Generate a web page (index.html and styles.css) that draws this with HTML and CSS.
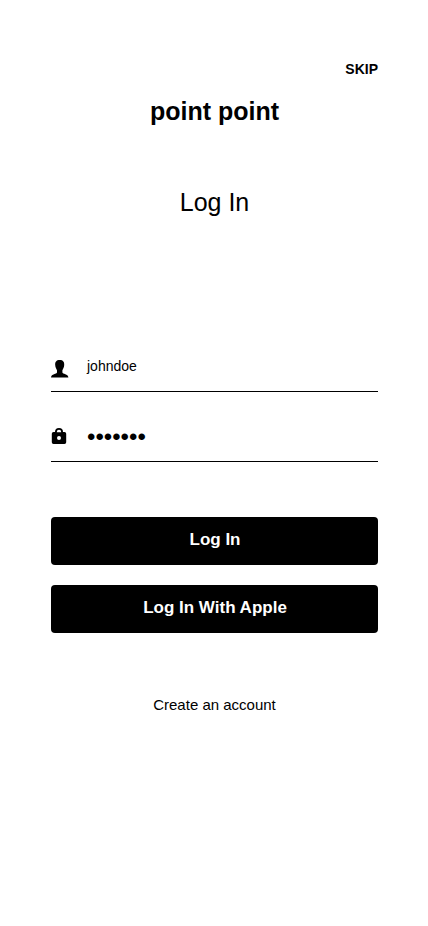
FILE: index.html
```html
<!DOCTYPE html>
<html lang="en">
<head>
<meta charset="utf-8">
<title>Log In</title>
<link rel="stylesheet" href="styles.css">
</head>
<body>
<main class="screen">
  <a class="skip">SKIP</a>
  <div class="brand">point point</div>
  <h1 class="title">Log In</h1>
  <div class="field field-user">
    <svg class="icon" width="18" height="18" viewBox="0 0 18 18"><path d="M8.700 0C5.300 0 4 2 4.200 5C4.300 7.500 5.400 9 6 10.200V12.500C5.800 14.300 .3 13.600 0 17.600H17.400C17.100 13.600 11.600 14.300 11.400 12.500V10.200C12 9 13.100 7.500 13.200 5C13.400 2 12.100 0 8.700 0Z"/></svg>
    <span class="value">johndoe</span>
  </div>
  <div class="field field-pass">
    <svg class="icon" width="16" height="16" viewBox="0 0 16 16"><path fill-rule="evenodd" d="M4 4V4A4 4 0 0 1 12 4V4H13.500A1.700 1.700 0 0 1 15.200 5.700V14.300A1.700 1.700 0 0 1 13.500 16H2.500A1.700 1.700 0 0 1 .8 14.300V5.700A1.700 1.700 0 0 1 2.500 4ZM5.800 4.300H10.200V4A2.200 2.200 0 0 0 5.800 4ZM8 8A2 2 0 1 0 8 12A2 2 0 1 0 8 8Z"/></svg>
    <span class="value dots">•••••••</span>
  </div>
  <button class="button">Log In</button>
  <button class="button">Log In With Apple</button>
  <a class="create">Create an account</a>
</main>
</body>
</html>
```
FILE: styles.css
```css
* { box-sizing: border-box; }
body { margin: 0; background: #fff; color: #000; font-family: "Liberation Sans", Arial, sans-serif; }
.screen { height: 926px; padding: 60px 50px 0 51px; display: flex; flex-direction: column; }
.skip { align-self: flex-end; font-size: 14px; line-height: 18px; font-weight: 700; }
.brand { margin-top: 18px; text-align: center; font-size: 25px; line-height: 30px; font-weight: 700; }
.title { margin: 61px 0 0; text-align: center; font-size: 25px; line-height: 30px; font-weight: 400; }
.field { display: flex; align-items: flex-start; border-bottom: 1px solid #000; }
.field-user { margin-top: 133px; height: 42px; padding-top: 10px; }
.field-pass { height: 70px; padding-top: 36px; margin-bottom: 55px; }
.icon { flex: none; display: block; }
.value { font-size: 14px; line-height: 16px; margin-left: 18px; margin-top: -2px; }
.dots { margin-left: 20px; font-size: 24px; margin-top: 1px; }
.button { height: 48px; margin: 0 0 20px; padding: 0 0 3px 1px; border: 0; border-radius: 4px; background: #000; color: #fff; font: 700 17px/20px "Liberation Sans", Arial, sans-serif; }
.create { margin-top: 42px; text-align: center; font-size: 15px; line-height: 20px; }
```
